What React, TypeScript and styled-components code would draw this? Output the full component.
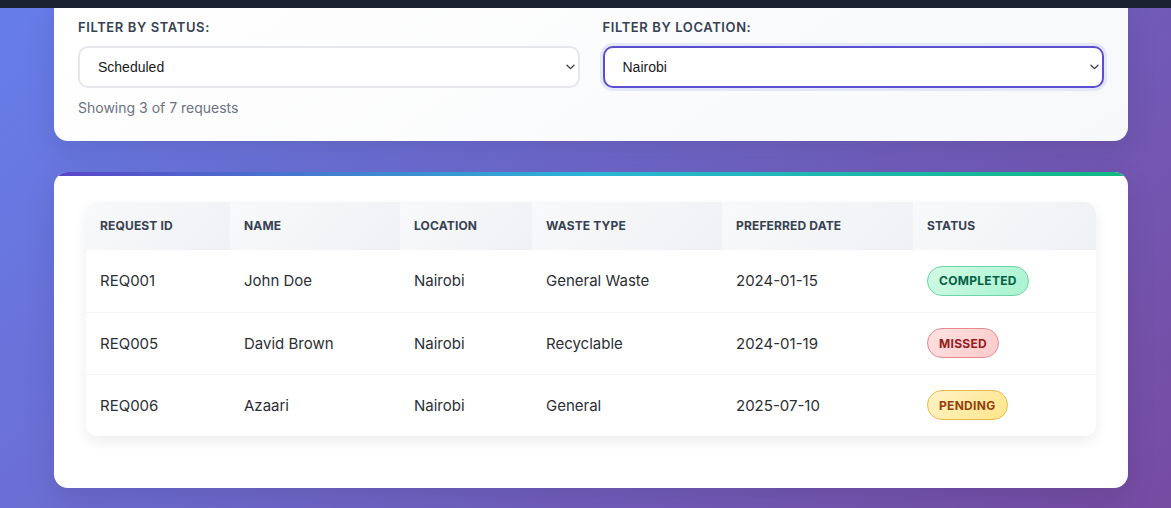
import styled, { createGlobalStyle } from "styled-components";

type Status = "completed" | "missed" | "pending";

const GlobalStyle = createGlobalStyle`
  * { box-sizing: border-box; }
  html, body {
    margin: 0;
    padding: 0;
    height: 100%;
    overflow: hidden;
  }
  body {
    font-family: Inter, "Noto Sans", "Liberation Sans", sans-serif;
    background: linear-gradient(135deg, #667eea 0%, #764ba2 100%);
    min-height: 508px;
  }
`;

const requests: {
  id: string;
  name: string;
  location: string;
  waste: string;
  date: string;
  status: Status;
}[] = [
  { id: "REQ001", name: "John Doe", location: "Nairobi", waste: "General Waste", date: "2024-01-15", status: "completed" },
  { id: "REQ005", name: "David Brown", location: "Nairobi", waste: "Recyclable", date: "2024-01-19", status: "missed" },
  { id: "REQ006", name: "Azaari", location: "Nairobi", waste: "General", date: "2025-07-10", status: "pending" },
];

const badgeColors: Record<Status, { bg: string; border: string; color: string }> = {
  completed: { bg: "linear-gradient(135deg, #d1fae5, #a7f3d0)", border: "#6fd3a8", color: "#065f46" },
  missed: { bg: "linear-gradient(135deg, #fee2e2, #fecaca)", border: "#e58a8f", color: "#991b1b" },
  pending: { bg: "linear-gradient(135deg, #fef3c7, #fde68a)", border: "#e9bb4a", color: "#92400e" },
};

const Chevron = () => (
  <svg width="9" height="6" viewBox="0 0 9 6" fill="none">
    <path d="M1 1.2 L4.5 4.6 L8 1.2" stroke="#3a3a3a" strokeWidth="1.3" strokeLinecap="round" strokeLinejoin="round" />
  </svg>
);

export default function App() {
  return (
    <>
      <GlobalStyle />
      <TopBar />
      <Page>
        <FilterCard>
          <FilterRow>
            <FilterGroup>
              <Label>Filter by Status:</Label>
              <SelectWrap>
                <Select defaultValue="Scheduled">
                  <option>All</option>
                  <option>Scheduled</option>
                  <option>Completed</option>
                </Select>
                <Arrow><Chevron /></Arrow>
              </SelectWrap>
            </FilterGroup>
            <FilterGroup>
              <Label>Filter by Location:</Label>
              <SelectWrap>
                <Select defaultValue="Nairobi" $focused>
                  <option>All</option>
                  <option>Nairobi</option>
                  <option>Mombasa</option>
                </Select>
                <Arrow><Chevron /></Arrow>
              </SelectWrap>
            </FilterGroup>
          </FilterRow>
          <Count>Showing 3 of 7 requests</Count>
        </FilterCard>

        <TableCard>
          <Accent />
          <TableBody>
            <TableWrap>
              <Table>
                <colgroup>
                  <col style={{ width: 144 }} />
                  <col style={{ width: 170 }} />
                  <col style={{ width: 132 }} />
                  <col style={{ width: 190 }} />
                  <col style={{ width: 191 }} />
                  <col style={{ width: 184 }} />
                </colgroup>
                <thead>
                  <tr>
                    <Th>Request ID</Th>
                    <Th>Name</Th>
                    <Th>Location</Th>
                    <Th>Waste Type</Th>
                    <Th>Preferred Date</Th>
                    <Th>Status</Th>
                  </tr>
                </thead>
                <tbody>
                  {requests.map((r) => (
                    <Row key={r.id}>
                      <Td>{r.id}</Td>
                      <Td>{r.name}</Td>
                      <Td>{r.location}</Td>
                      <Td>{r.waste}</Td>
                      <Td>{r.date}</Td>
                      <Td>
                        <Badge $status={r.status}>{r.status}</Badge>
                      </Td>
                    </Row>
                  ))}
                </tbody>
              </Table>
            </TableWrap>
          </TableBody>
        </TableCard>
      </Page>
    </>
  );
}

const TopBar = styled.header`
  position: fixed;
  top: 0;
  left: 0;
  right: 0;
  height: 8px;
  background: #1a2232;
  z-index: 10;
`;

const Page = styled.main`
  width: 1128px;
  padding: 0 0 20px 54px;
  display: flex;
  flex-direction: column;
  gap: 31px;
`;

const FilterCard = styled.section`
  margin-top: -6px;
  padding: 25px 24px 24px;
  border-radius: 14px;
  background: linear-gradient(145deg, #ffffff 0%, #f7f8fa 100%);
  box-shadow: 0 10px 30px rgba(0, 0, 0, 0.1);
`;

const FilterRow = styled.div`
  display: grid;
  grid-template-columns: 1fr 1fr;
  gap: 23px;
`;

const FilterGroup = styled.div`
  display: flex;
  flex-direction: column;
  gap: 11px;
`;

const Label = styled.label`
  font-size: 13px;
  line-height: 16px;
  font-weight: 600;
  letter-spacing: 0.6px;
  text-transform: uppercase;
  color: #374151;
`;

const SelectWrap = styled.div`
  position: relative;
`;

const Select = styled.select<{ $focused?: boolean }>`
  appearance: none;
  width: 100%;
  height: 42px;
  padding: 0 18px;
  font-family: "Liberation Sans", Arial, sans-serif;
  font-size: 14px;
  color: #1a1a1a;
  background: #ffffff;
  border: 2px solid ${(p) => (p.$focused ? "#5b4fd0" : "#e6e7ea")};
  border-radius: 10px;
  box-shadow: ${(p) => (p.$focused ? "0 0 0 3px rgba(102, 126, 234, 0.14)" : "none")};
  outline: none;
`;

const Arrow = styled.span`
  position: absolute;
  right: 5px;
  top: 50%;
  transform: translateY(-50%);
  display: flex;
  pointer-events: none;
`;

const Count = styled.p`
  margin: 11px 0 0;
  font-size: 14px;
  line-height: 18px;
  color: #6b7280;
`;

const TableCard = styled.section`
  display: flex;
  flex-direction: column;
  border-radius: 14px;
  overflow: hidden;
  background: #ffffff;
  box-shadow: 0 10px 30px rgba(0, 0, 0, 0.1);
`;

const Accent = styled.div`
  height: 4px;
  background: linear-gradient(90deg, #5b45c9 0%, #2bb5d6 50%, #10b981 100%);
`;

const TableBody = styled.div`
  padding: 26px 32px 52px;
`;

const TableWrap = styled.div`
  border-radius: 12px;
  overflow: hidden;
  box-shadow: 0 6px 14px rgba(0, 0, 0, 0.07);
`;

const Table = styled.table`
  width: 100%;
  table-layout: fixed;
  border-collapse: collapse;
`;

const Th = styled.th`
  height: 48px;
  padding: 0 14px;
  text-align: left;
  vertical-align: middle;
  font-size: 12px;
  line-height: 16px;
  font-weight: 700;
  letter-spacing: 0.15px;
  text-transform: uppercase;
  color: #374151;
  background: linear-gradient(135deg, #f8f9fa 0%, #eff1f4 100%);
`;

const Row = styled.tr`
  & + & td {
    border-top: 1px solid #f3f4f6;
  }
`;

const Td = styled.td`
  height: 62px;
  padding: 0 14px;
  vertical-align: middle;
  font-size: 15px;
  line-height: 21px;
  color: #2b2f36;
  background: #ffffff;
`;

const Badge = styled.span<{ $status: Status }>`
  display: inline-flex;
  align-items: center;
  height: 30px;
  padding: 0 11px;
  vertical-align: middle;
  font-size: 12px;
  font-weight: 700;
  letter-spacing: 0.3px;
  text-transform: uppercase;
  border-radius: 999px;
  background: ${(p) => badgeColors[p.$status].bg};
  border: 1px solid ${(p) => badgeColors[p.$status].border};
  color: ${(p) => badgeColors[p.$status].color};
`;
